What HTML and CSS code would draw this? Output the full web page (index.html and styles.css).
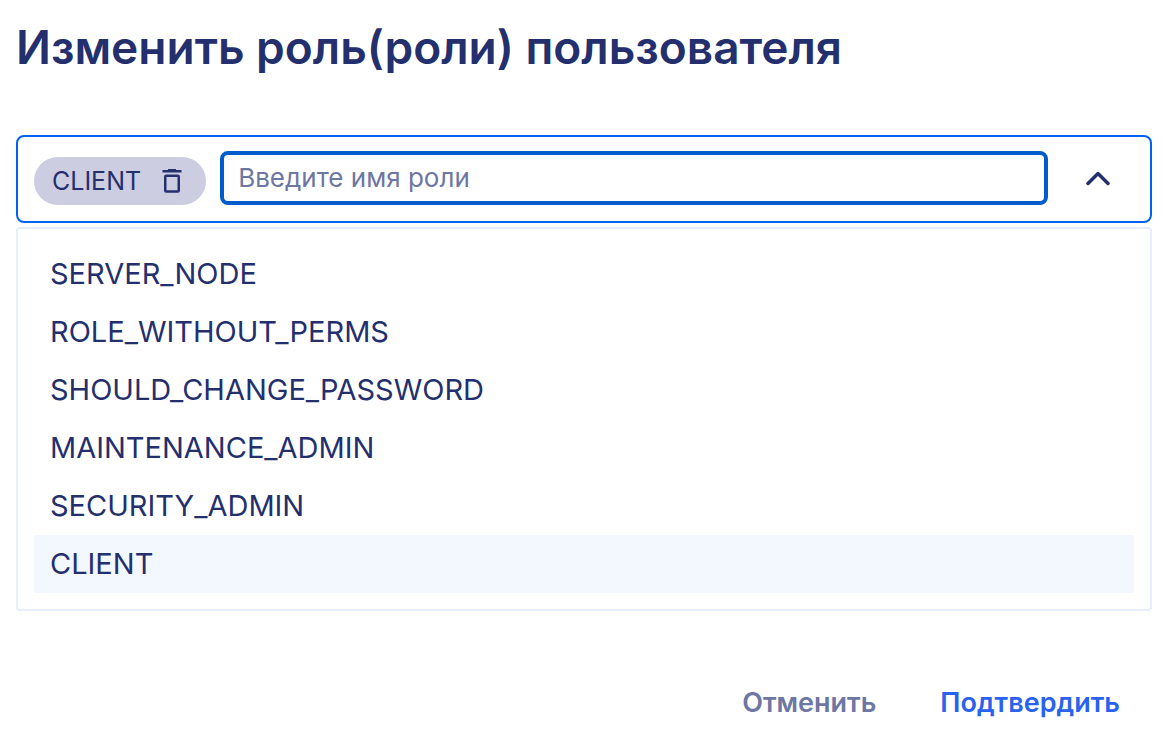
FILE: index.html
```html
<!DOCTYPE html>
<html lang="ru">
<head>
  <meta charset="UTF-8" />
  <meta name="viewport" content="width=device-width, initial-scale=1.0"/>
  <title>Изменить роль(роли) пользователя</title>
  <link rel="stylesheet" href="styles.css">
</head>
<body>
  <form class="role-dialog">
    <h1>Изменить роль(роли) пользователя</h1>

    <div class="role-select">
      <div class="role-field">
        <span class="chip">
          <span>CLIENT</span>
          <button type="button" class="chip-remove" aria-label="Удалить роль CLIENT">
            <svg width="20" height="24" viewBox="0 0 20 24" fill="none">
              <path d="M.5 1H6V0h8v1h5.500v2.500H.5z" fill="currentColor"/>
              <rect x="3.250" y="6.750" width="13.500" height="15.750" rx="1" stroke="currentColor" stroke-width="2.500"/>
            </svg>
          </button>
        </span>
        <input type="text" id="roleName" class="role-input" placeholder="Введите имя роли" aria-label="Введите имя роли" autocomplete="off">
        <button type="button" class="toggle" aria-label="Свернуть список" aria-expanded="true">
          <svg width="24" height="16" viewBox="0 0 24 16" fill="none">
            <path d="M2 13.500L12 3.500l10 10" stroke="currentColor" stroke-width="3.500" stroke-linecap="round" stroke-linejoin="round"/>
          </svg>
        </button>
      </div>

      <ul class="role-list">
        <li><button type="button">SERVER_NODE</button></li>
        <li><button type="button">ROLE_WITHOUT_PERMS</button></li>
        <li><button type="button">SHOULD_CHANGE_PASSWORD</button></li>
        <li><button type="button">MAINTENANCE_ADMIN</button></li>
        <li><button type="button">SECURITY_ADMIN</button></li>
        <li><button type="button" class="selected">CLIENT</button></li>
      </ul>
    </div>

    <div class="actions">
      <button type="button" class="cancel">Отменить</button>
      <button type="submit" class="confirm">Подтвердить</button>
    </div>
  </form>
</body>
</html>
```
FILE: styles.css
```css
* {
  margin: 0;
  padding: 0;
  box-sizing: border-box;
  font-family: Inter, 'Open Sans', sans-serif;
}

body {
  background-color: #ffffff;
  color: #242f6e;
}

button {
  background: none;
  border: none;
  color: inherit;
  cursor: pointer;
}

svg {
  display: block;
}

.role-dialog {
  padding: 20px 18px 20px 16px;
}

h1 {
  font-size: 46px;
  line-height: 54px;
  font-weight: 600;
  margin-bottom: 61px;
}

.role-field {
  display: flex;
  align-items: center;
  min-height: 88px;
  padding: 14px 16px 16px;
  border: 2px solid #0062f5;
  border-radius: 8px;
}

.chip {
  display: flex;
  align-items: center;
  gap: 21px;
  height: 48px;
  padding: 0 24px 0 18px;
  margin: 6px 14px 0 0;
  border-radius: 24px;
  background-color: #cccde0;
  font-size: 25px;
}

.role-input {
  flex: 1;
  min-width: 0;
  height: 54px;
  padding: 0 14px 2px;
  border: 4px solid #005dcb;
  border-radius: 8px;
  color: #242f6e;
  font-size: 26px;
  outline: none;
}

.role-input::placeholder {
  color: #6e76a3;
  opacity: 1;
}

.toggle {
  padding: 16px 24px;
  margin-left: 14px;
}

.role-list {
  margin-top: 4px;
  padding: 16px;
  border: 2px solid #e6effd;
  border-radius: 4px;
  list-style: none;
}

.role-list button {
  display: block;
  width: 100%;
  padding: 0 16px;
  font-size: 29px;
  line-height: 58px;
  text-align: left;
}

.role-list .selected {
  background-color: #f3f8ff;
}

.actions {
  display: flex;
  justify-content: flex-end;
  gap: 64px;
  margin-top: 72px;
  padding-right: 32px;
}

.actions button {
  font-size: 27px;
  line-height: 40px;
  font-weight: 600;
}

.cancel {
  color: #6e76a3;
}

.confirm {
  color: #2a62f0;
}
```
